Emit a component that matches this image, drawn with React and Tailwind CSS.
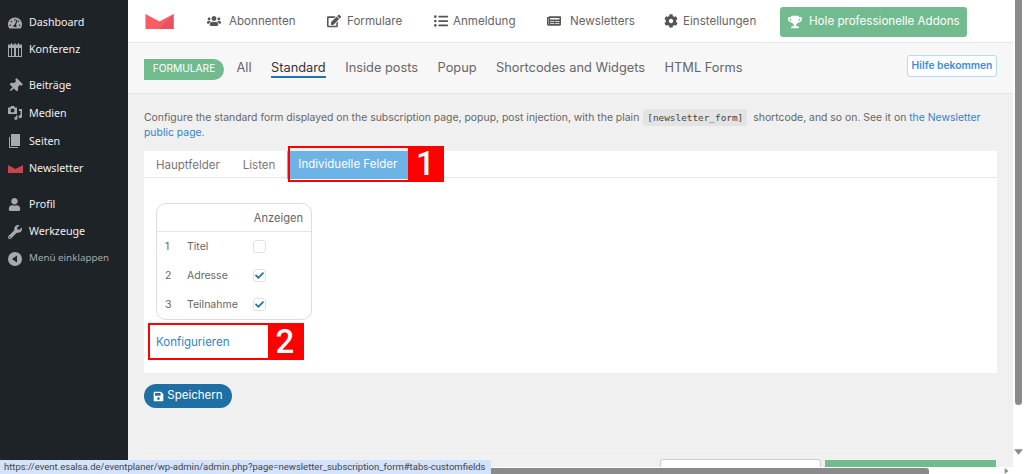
import React from 'react';
import { FaTachometerAlt, FaThumbtack, FaUser, FaWrench, FaUsers, FaEdit, FaListUl, FaNewspaper, FaCog, FaTrophy, FaSave, FaCheck } from 'react-icons/fa';

const Logo = ({ className }) => (
    <svg viewBox="0 0 30 16" className={className}>
        <path d="M0 0 L15 8 L30 0 V16 H0 Z" fill="#fa5c64" />
        <path d="M15 16 L30 0 V16 Z" fill="#e8525c" />
    </svg>
);

const Mail = ({ className }) => (
    <svg viewBox="0 0 30 16" className={className}>
        <path d="M0 0 L15 8 L30 0 V16 H0 Z" fill="currentColor" />
    </svg>
);

// wp dashicons that the icon packs don't really have
const CalendarIcon = () => (
    <svg viewBox="0 0 14 14" className="h-[14px] w-[14px]" fill="currentColor">
        <path d="M3 0h1v2H3zM6.5 0h1v2h-1zM10 0h1v2h-1z" />
        <path d="M0 1.5h14V14H0z M1 5v8h2V5z M4 5v8h2V5z M8 5v8h2V5z M11 5v8h2V5z" fillRule="evenodd" />
    </svg>
);

const MediaIcon = () => (
    <svg viewBox="0 0 14 14" className="h-[14px] w-[14px]" fill="currentColor">
        <path d="M0 1.5h2l1-1.5h3l1 1.5h2V8H0z M4.5 2.5a2 2 0 1 0 0 4a2 2 0 0 0 0-4z" fillRule="evenodd" />
        <path d="M11 3h3v7.5a1.7 1.7 0 1 1-1.5-1.6V5h-1.5z M8 9.5h1.5v2.8a1.6 1.6 0 1 1-1.5-1.6z" />
    </svg>
);

const PagesIcon = () => (
    <svg viewBox="0 0 14 14" className="h-[14px] w-[14px]" fill="currentColor">
        <path d="M1 3h1v10h8v1H1z" />
        <path d="M3 0h9v12H3z" />
    </svg>
);

const CollapseIcon = () => (
    <svg viewBox="0 0 14 14" className="h-[14px] w-[14px]" fill="currentColor">
        <path d="M7 0a7 7 0 1 1 0 14a7 7 0 0 1 0-14z M9 3.5L4 7l5 3.5z" fillRule="evenodd" />
    </svg>
);

const PinIcon = () => <FaThumbtack size={14} className="rotate-45" />;

const menu = [
    { label: 'Dashboard', icon: <FaTachometerAlt size={14} />, cls: 'h-[27px]' },
    { label: 'Konferenz', icon: <CalendarIcon />, cls: 'h-[27px] mb-[9px]' },
    { label: 'Beiträge', icon: <PinIcon />, cls: 'h-[27px]' },
    { label: 'Medien', icon: <MediaIcon />, cls: 'h-[28px]' },
    { label: 'Seiten', icon: <PagesIcon />, cls: 'h-[28px]' },
    { label: 'Newsletter', icon: <Mail className="h-[8px] w-[15px] text-[#c9444b]" />, cls: 'h-[27px] mb-[9px]' },
    { label: 'Profil', icon: <FaUser size={13} />, cls: 'h-[27px]' },
    { label: 'Werkzeuge', icon: <FaWrench size={14} />, cls: 'h-[27px]' },
    { label: 'Menü einklappen', icon: <CollapseIcon />, cls: 'h-[27px] text-[9.8px] text-[#a7aaad]' },
];

const topNav = [
    { label: 'Abonnenten', icon: FaUsers, w: 'w-[120px]', iw: 'w-[22px]' },
    { label: 'Formulare', icon: FaEdit, w: 'w-[107px]', iw: 'w-[20px]' },
    { label: 'Anmeldung', icon: FaListUl, w: 'w-[113px]', iw: 'w-[19px]' },
    { label: 'Newsletters', icon: FaNewspaper, w: 'w-[117px]', iw: 'w-[23px]' },
    { label: 'Einstellungen', icon: FaCog, w: 'w-[116px]', iw: 'w-[19px]' },
];

const subNav = ['All', 'Standard', 'Inside posts', 'Popup', 'Shortcodes and Widgets', 'HTML Forms'];

const fields = [
    { n: 1, label: 'Titel', on: false },
    { n: 2, label: 'Adresse', on: true },
    { n: 3, label: 'Teilnahme', on: true },
];

export default function App() {
    return (
        <div className="relative flex h-[474px] w-[1024px] overflow-hidden bg-[#f0f0f0] font-['Inter',sans-serif] text-[#666]">
            {/* wp sidebar */}
            <aside className="w-[128px] shrink-0 bg-[#1d2327] pt-[9px] font-['Noto_Sans',sans-serif] text-[10.7px] text-[#f0f0f1]">
                {menu.map(m => (
                    <div key={m.label} className={`flex items-center pl-[8px] ${m.cls}`}>
                        <span className="flex w-[21px] shrink-0 justify-start text-[#a7aaad]">{m.icon}</span>
                        {m.label}
                    </div>
                ))}
            </aside>

            <main className="h-[467px] w-[885px] shrink-0 overflow-hidden">
                {/* top nav */}
                <div className="flex h-[43px] items-center border-b border-[#e4e4e4] bg-white pl-[17px] pt-[1px] text-[11.6px]">
                    <Logo className="mr-[33px] h-[15px] w-[29px]" />
                    {topNav.map(n => (
                        <div key={n.label} className={`flex items-center ${n.w}`}>
                            <span className={`shrink-0 ${n.iw}`}><n.icon size={14} className="text-[#555]" /></span>
                            {n.label}
                        </div>
                    ))}
                    <div className="flex h-[30px] w-[187px] items-center gap-[7px] rounded-[3px] bg-[#72bb8f] pl-[8px] text-white">
                        <FaTrophy size={14} />
                        Hole professionelle Addons
                    </div>
                </div>

                {/* sub nav */}
                <div className="flex h-[51px] items-center border-b border-[#e4e4e4] bg-[#f7f7f7] pl-[16px] pr-[16px] text-[12.8px]">
                    <span className="mr-[12.5px] mt-[2px] flex h-[21px] w-[80px] items-center justify-center rounded-l-[4px] rounded-r-full bg-[#72bb8f] text-[10.2px] text-white">FORMULARE</span>
                    {subNav.map(s => (
                        <span key={s} className={`mr-[19.5px] mt-[2px] border-b-2 leading-[16px] ${s === 'Standard' ? 'border-[#2271b1] text-[#333]' : 'border-transparent'}`}>{s}</span>
                    ))}
                    <span className="mb-[4px] ml-auto flex h-[22px] w-[90px] items-center justify-center rounded-[3px] border border-[#b5dcf5] bg-white text-[10.3px] font-semibold text-[#3b8edc]">Hilfe bekommen</span>
                </div>

                {/* content */}
                <div className="px-[16px] pt-[16px]">
                    <p className="text-[10.42px] leading-[15px]">
                        Configure the standard form displayed on the subscription page, popup, post injection, with the plain
                        <code className="ml-[4px] mr-[6px] rounded-[2px] bg-[#e4e4e4] px-[4px] py-[3px] font-['DejaVu_Sans_Mono',monospace] text-[9.4px] text-[#444]">[newsletter_form]</code>
                        shortcode, and so on. See it on <span className="text-[#3582c4]">the Newsletter public page</span>.
                    </p>

                    <div className="mt-[11px] flex h-[27px] w-[853px] items-center border-b border-[#e6e6e6] bg-white pl-[12px] pt-[3px] text-[11.5px] text-[#777]">
                        <span>Hauptfelder</span>
                        <span className="ml-[23px]">Listen</span>
                        <div className="relative ml-[12px] -mt-[3px] flex h-[28px] w-[121px] items-center self-start bg-[#6db3e6] pl-[11px] text-white">
                            Individuelle Felder
                            {/* annotation 1 */}
                            <div className="absolute left-[1px] top-[-5px] flex h-[36px] w-[156px] justify-end border-2 border-[#f00]">
                                <div className="flex w-[34px] items-center justify-center bg-[#f00] font-['Roboto',sans-serif] text-[33px] font-medium text-white">1</div>
                            </div>
                        </div>
                    </div>

                    <div className="w-[853px] bg-white px-[12px] pb-[11px] pt-[25px]">
                        <div className="w-[156px] rounded-[10px] border border-[#ddd] text-[10.5px]">
                            <div className="flex h-[28px] items-center justify-end border-b border-[#e6e6e6] pr-[8px] pt-[2px] text-[11.1px]">Anzeigen</div>
                            {fields.map(f => (
                                <div key={f.n} className="flex h-[29px] items-center">
                                    <span className="w-[30px] pl-[8px]">{f.n}</span>
                                    <span className="w-[66px]">{f.label}</span>
                                    <span className="flex h-[13px] w-[13px] items-center justify-center rounded-[3px] border border-[#e2e2e2] bg-white">
                                        {f.on && <FaCheck size={9} className="text-[#2271b1]" />}
                                    </span>
                                </div>
                            ))}
                        </div>
                        <div className="relative flex h-[42px] items-center pt-[3px] text-[11.5px] text-[#3582c4]">
                            Konfigurieren
                            {/* annotation 2 */}
                            <div className="absolute left-[-8px] top-[3px] flex h-[37px] w-[156px] justify-end border-2 border-[#f00]">
                                <div className="flex w-[34px] items-center justify-center bg-[#f00] font-['Roboto',sans-serif] text-[33px] font-medium text-white">2</div>
                            </div>
                        </div>
                    </div>

                    <button className="mt-[11px] flex h-[24px] w-[88px] items-center justify-center gap-[3px] rounded-full bg-[#1f6fa5] text-[11.5px] text-white">
                        <FaSave size={11} />
                        Speichern
                    </button>

                    {/* footer, mostly below the fold */}
                    <div className="mt-[42px] flex w-[852px] justify-end gap-[4px] border-t border-[#f5f5f5] pt-[8px]">
                        <div className="h-[20px] w-[161px] rounded-[3px] border border-[#ccc] bg-white" />
                        <div className="mt-[1px] h-[20px] w-[171px] bg-[#72bb8f]" />
                    </div>
                </div>
            </main>

            {/* vertical scrollbar */}
            <div className="absolute right-0 top-0 flex h-[467px] w-[11px] flex-col items-center bg-white">
                <div className="h-[405px] w-[7px] rounded-b-full bg-[#8a8a8a]" />
                <svg viewBox="0 0 10 6" className="mt-[44px] h-[6px] w-[9px] text-[#8a8a8a]"><path d="M0 0h10L5 6z" fill="currentColor" /></svg>
            </div>

            {/* horizontal scrollbar */}
            <div className="absolute bottom-0 left-[128px] flex h-[7px] w-[896px] items-end bg-white">
                <div className="h-[6px] w-[801px] rounded-tr-[3px] bg-[#8a8a8a]" />
                <svg viewBox="0 0 6 10" className="ml-[75px] h-[6px] w-[5px] text-[#8a8a8a]"><path d="M0 0v10l6-5z" fill="currentColor" /></svg>
            </div>

            {/* status bar link */}
            <div className="absolute bottom-0 left-0 flex h-[14px] w-[491px] items-center overflow-hidden whitespace-nowrap bg-[#d3e3fd] pl-[4px] font-['Roboto',sans-serif] text-[9.5px] text-[#444]">
                https://event.esalsa.de/eventplaner/wp-admin/admin.php?page=newsletter_subscription_form#tabs-customfields
            </div>
        </div>
    );
}
